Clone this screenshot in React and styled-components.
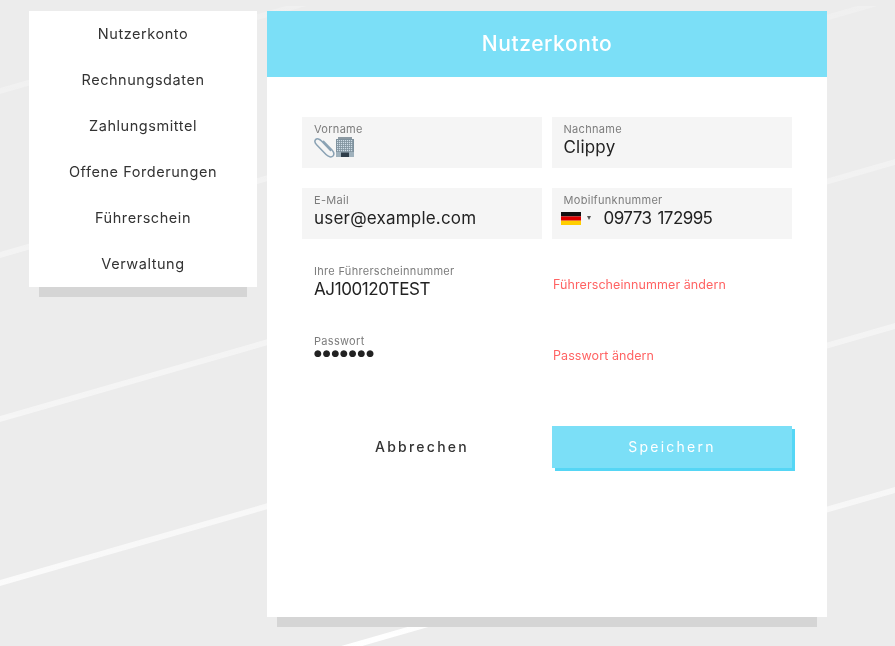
import styled, { createGlobalStyle } from 'styled-components';

const GlobalStyle = createGlobalStyle`
  html, body {
    margin: 0;
    padding: 0;
    background: #ececec;
  }
  body {
    font-family: Inter, "Liberation Sans", sans-serif;
    color: #2b2b2b;
  }
`
const Backdrop = styled.svg`
  position: fixed;
  top: 0;
  left: 0;
  width: 895px;
  height: 646px;
`
const Page = styled.div`
  position: relative;
  display: flex;
  align-items: flex-start;
  gap: 10px;
  width: 895px;
  height: 646px;
  padding: 11px 0 0 29px;
  box-sizing: border-box;
  overflow: hidden;
`
const Sidebar = styled.nav`
  width: 228px;
  background: #fff;
  box-shadow: 0 20px 0 -10px #d5d5d5;
`
const NavItem = styled.a`
  display: block;
  height: 46px;
  line-height: 45px;
  text-align: center;
  font-size: 14.5px;
  letter-spacing: 0.55px;
  color: #333;
`
const Panel = styled.main`
  width: 560px;
  height: 606px;
  background: #fff;
  box-shadow: 0 20px 0 -10px #d5d5d5;
`
const PanelHeader = styled.h1`
  margin: 0;
  height: 66px;
  line-height: 66px;
  text-align: center;
  background: #7bdff7;
  color: #fff;
  font-size: 21px;
  font-weight: 500;
  letter-spacing: 0.6px;
`
const Form = styled.form`
  display: grid;
  grid-template-columns: 240px 240px;
  column-gap: 10px;
  row-gap: 20px;
  padding: 40px 35px;
`
const Field = styled.div`
  height: 51px;
  padding: 6px 12px 0 ${p => (p.$right ? '11.5px' : '12px')};
  box-sizing: border-box;
  background: ${p => (p.$plain ? 'transparent' : '#f5f5f5')};
`
const PasswordField = styled(Field)`
  padding-top: 5px;
`
const Label = styled.div`
  font-size: 11px;
  line-height: 12px;
  letter-spacing: 0.3px;
  color: #7c7c7c;
`
const Value = styled.div`
  display: flex;
  align-items: center;
  height: 22px;
  margin-top: 1px;
  font-size: 17px;
  letter-spacing: ${p => (p.$tight ? '-0.4px' : '0.2px')};
  color: #222;
`
const Dots = styled.div`
  height: 10px;
  margin-top: 1px;
  font-family: "DejaVu Sans", sans-serif;
  font-size: 9px;
  line-height: 10px;
  letter-spacing: 0.85px;
  color: #222;
`
const PhoneValue = styled(Value)`
  margin-left: -3px;
  letter-spacing: -0.58px;
  word-spacing: 2px;
`
const Caret = styled.span`
  width: 0;
  height: 0;
  margin: 0 13px 0 6px;
  border-left: 2.5px solid transparent;
  border-right: 2.5px solid transparent;
  border-top: 4px solid #555;
`
const ChangeLink = styled.a`
  align-self: center;
  padding-left: 1px;
  font-size: 12.5px;
  letter-spacing: 0.08px;
  color: #ff6363;
`
const Actions = styled.div`
  grid-column: 1 / -1;
  display: grid;
  grid-template-columns: 240px 240px;
  column-gap: 10px;
  margin-top: 25px;
`
const Button = styled.button`
  height: 42px;
  padding: 0 0 2px;
  border: 0;
  font-family: inherit;
  font-size: 14px;
  font-weight: ${p => (p.$primary ? 400 : 500)};
  letter-spacing: 2.25px;
  background: ${p => (p.$primary ? '#7bdff7' : 'transparent')};
  color: ${p => (p.$primary ? '#fff' : '#333')};
  box-shadow: ${p => (p.$primary ? '3px 3px 0 #55d6f5' : 'none')};
`

const navItems = [
  'Nutzerkonto',
  'Rechnungsdaten',
  'Zahlungsmittel',
  'Offene Forderungen',
  'Führerschein',
  'Verwaltung',
]

// background stripes, intercept at x=0
const stripes = [91, 255, 419, 583, 747]

const BackgroundLines = () => (
  <Backdrop viewBox="0 0 895 646">
    <defs>
      <linearGradient id="fade" gradientUnits="userSpaceOnUse" x1="0" y1="0" x2="0" y2="646">
        <stop offset="0" stopColor="#fff" stopOpacity="0.2" />
        <stop offset="0.6" stopColor="#fff" stopOpacity="0.47" />
        <stop offset="0.85" stopColor="#fff" stopOpacity="0.65" />
        <stop offset="1" stopColor="#fff" stopOpacity="1" />
      </linearGradient>
      <clipPath id="clip">
        <rect x="0" y="6" width="895" height="640" />
      </clipPath>
    </defs>
    <g clipPath="url(#clip)">
      {stripes.map(c => (
        <polygon
          key={c}
          fill="url(#fade)"
          points={`0,${c - 3} 895,${c - 3 - 257} 895,${c + 3 - 257} 0,${c + 3}`}
        />
      ))}
    </g>
  </Backdrop>
)

const PaperclipIcon = () => (
  <svg width="21" height="21" viewBox="0 0 21 21" fill="none">
    <path
      d="M16.5 13.5 L7.5 4 C5.5 1.8 3 1.2 1.8 2.4 C.5 3.7 .9 6 2.6 7.8 L12 17.6 C14.4 20 17.4 20.6 19 19 C20.4 17.4 19.8 15 18 13 L9.5 4.2"
      stroke="#8aa2b4"
      strokeWidth="1.5"
      strokeLinecap="round"
    />
  </svg>
)

const BuildingIcon = () => (
  <svg width="20" height="20" viewBox="0 0 20 20">
    <rect x="3" y="0" width="14" height="2" fill="#8d9aa3" />
    <rect x="1" y="2" width="18" height="18" fill="#7f929e" />
    {[3, 5, 7, 9, 11, 13].map(y =>
      [2, 4, 6, 8, 10, 12, 14, 16].map(x => (
        <rect key={`${x}-${y}`} x={x} y={y} width="1.2" height="1.2" fill="#cfdde6" />
      ))
    )}
    <rect x="1" y="15" width="18" height="5" fill="#9fb1bc" />
    <rect x="6" y="15.5" width="8" height="4.5" fill="#2f3e4a" />
  </svg>
)

const GermanFlag = () => (
  <svg width="20" height="13" viewBox="0 0 20 13">
    <rect width="20" height="4.4" fill="#111" />
    <rect y="4.4" width="20" height="4.3" fill="#dd0000" />
    <rect y="8.7" width="20" height="4.3" fill="#ffce00" />
  </svg>
)

const App = () => (
  <>
    <GlobalStyle />
    <BackgroundLines />
    <Page>
      <Sidebar>
        {navItems.map(item => (
          <NavItem key={item}>{item}</NavItem>
        ))}
      </Sidebar>
      <Panel>
        <PanelHeader>Nutzerkonto</PanelHeader>
        <Form>
          <Field>
            <Label>Vorname</Label>
            <Value>
              <PaperclipIcon />
              <BuildingIcon />
            </Value>
          </Field>
          <Field $right>
            <Label>Nachname</Label>
            <Value>Clippy</Value>
          </Field>
          <Field>
            <Label>E-Mail</Label>
            <Value>user@example.com</Value>
          </Field>
          <Field $right>
            <Label>Mobilfunknummer</Label>
            <PhoneValue>
              <GermanFlag />
              <Caret />
              09773 172995
            </PhoneValue>
          </Field>
          <Field $plain>
            <Label>Ihre Führerscheinnummer</Label>
            <Value $tight>AJ100120TEST</Value>
          </Field>
          <ChangeLink>Führerscheinnummer ändern</ChangeLink>
          <PasswordField $plain>
            <Label>Passwort</Label>
            <Dots>●●●●●●●</Dots>
          </PasswordField>
          <ChangeLink>Passwort ändern</ChangeLink>
          <Actions>
            <Button type="button">Abbrechen</Button>
            <Button type="button" $primary>Speichern</Button>
          </Actions>
        </Form>
      </Panel>
    </Page>
  </>
)

export default App
